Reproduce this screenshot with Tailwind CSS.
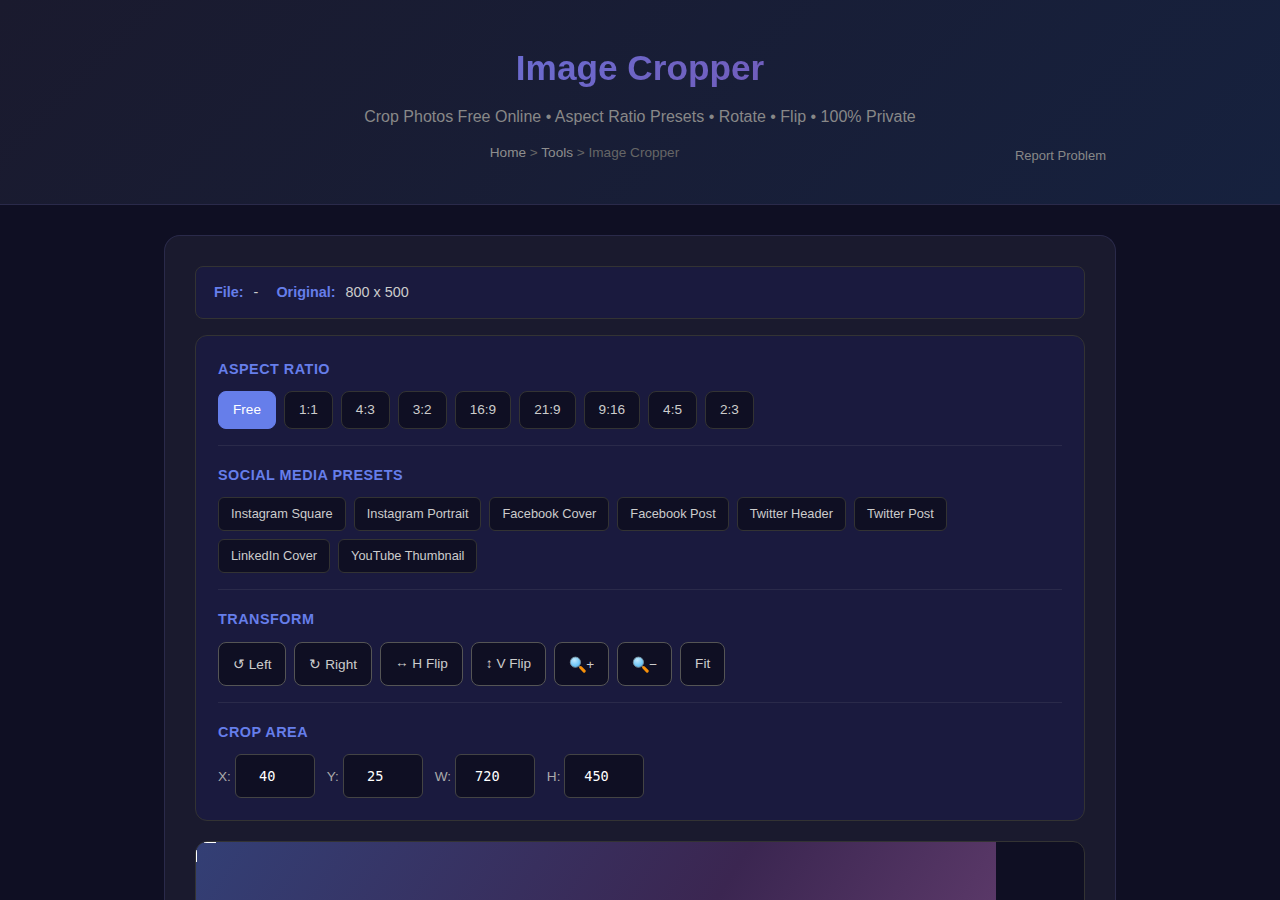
<!DOCTYPE html>
<html lang="en">
<head>
    <meta charset="UTF-8">
    <meta name="viewport" content="width=device-width, initial-scale=1.0">
    <title>Image Cropper</title>
    <script src="https://cdn.jsdelivr.net/npm/@tailwindcss/browser@4"></script>
</head>
<body class="h-[900px] overflow-hidden bg-[#0f0f23] font-['Liberation_Sans',Arial,sans-serif] leading-[1.6] text-[#ccc]">

    <!-- Header -->
    <header class="h-[205px] border-b border-[#2a2a4a] bg-[linear-gradient(135deg,#1a1a2e_0%,#16213e_100%)] pt-10">
        <div class="mx-auto w-[952px] text-center">
            <h1 class="mb-2 bg-[linear-gradient(135deg,#667eea_0%,#764ba2_100%)] bg-clip-text text-[35.2px] leading-[1.6] font-bold text-transparent">Image Cropper</h1>
            <p class="mb-3 text-[16px] leading-[1.6] text-[#888]">Crop Photos Free Online • Aspect Ratio Presets • Rotate • Flip • 100% Private</p>
            <div class="flex items-start">
                <nav class="flex-1 text-[13.6px] text-[#666]">
                    <a href="#" class="text-[#8e8e8e]">Home</a> &gt; <a href="#" class="text-[#8e8e8e]">Tools</a> &gt; Image Cropper
                </nav>
                <a href="#" class="px-2.5 pt-1 text-[13px] text-[#888]">Report Problem</a>
            </div>
        </div>
    </header>

    <!-- Tool card -->
    <main class="mx-auto mt-[30px] h-[665px] w-[952px] overflow-hidden rounded-t-2xl border border-b-0 border-[#2a2a4a] bg-[#1a1a2e] px-[30px] pt-[30px]">

        <!-- File info -->
        <div class="mb-4 flex h-[53px] items-center rounded-lg border border-[#333] bg-[#1a1a3e] px-[18px] text-[14.4px]">
            <strong class="mr-2.5 text-[#667eea]">File:</strong>
            <span class="mr-[18px]">-</span>
            <strong class="mr-2.5 text-[#667eea]">Original:</strong>
            <span>800 x 500</span>
        </div>

        <!-- Controls -->
        <div class="mb-5 rounded-xl border border-[#333] bg-[#1a1a3e] p-[22px]">
            <section class="border-b border-[#2a2a4a] pb-4">
                <h3 class="mb-2.5 text-[14.4px] leading-[1.6] font-bold tracking-[0.5px] text-[#667eea] uppercase">Aspect Ratio</h3>
                <div class="flex gap-2 text-[13.6px]">
                    <button class="h-[38px] rounded-lg border border-[#667eea] bg-[#667eea] px-3.5 text-white">Free</button>
                    <button class="h-[38px] rounded-lg border border-[#333] bg-[#0f0f23] px-3.5">1:1</button>
                    <button class="h-[38px] rounded-lg border border-[#333] bg-[#0f0f23] px-3.5">4:3</button>
                    <button class="h-[38px] rounded-lg border border-[#333] bg-[#0f0f23] px-3.5">3:2</button>
                    <button class="h-[38px] rounded-lg border border-[#333] bg-[#0f0f23] px-3.5">16:9</button>
                    <button class="h-[38px] rounded-lg border border-[#333] bg-[#0f0f23] px-3.5">21:9</button>
                    <button class="h-[38px] rounded-lg border border-[#333] bg-[#0f0f23] px-3.5">9:16</button>
                    <button class="h-[38px] rounded-lg border border-[#333] bg-[#0f0f23] px-3.5">4:5</button>
                    <button class="h-[38px] rounded-lg border border-[#333] bg-[#0f0f23] px-3.5">2:3</button>
                </div>
            </section>

            <section class="border-b border-[#2a2a4a] pt-[18px] pb-4">
                <h3 class="mb-2.5 text-[14.4px] leading-[1.6] font-bold tracking-[0.5px] text-[#667eea] uppercase">Social Media Presets</h3>
                <div class="flex flex-wrap gap-2 text-[12.8px]">
                    <button class="h-[34px] rounded-md border border-[#333] bg-[#0f0f23] px-3">Instagram Square</button>
                    <button class="h-[34px] rounded-md border border-[#333] bg-[#0f0f23] px-3">Instagram Portrait</button>
                    <button class="h-[34px] rounded-md border border-[#333] bg-[#0f0f23] px-3">Facebook Cover</button>
                    <button class="h-[34px] rounded-md border border-[#333] bg-[#0f0f23] px-3">Facebook Post</button>
                    <button class="h-[34px] rounded-md border border-[#333] bg-[#0f0f23] px-3">Twitter Header</button>
                    <button class="h-[34px] rounded-md border border-[#333] bg-[#0f0f23] px-3">Twitter Post</button>
                    <button class="h-[34px] rounded-md border border-[#333] bg-[#0f0f23] px-3">LinkedIn Cover</button>
                    <button class="h-[34px] rounded-md border border-[#333] bg-[#0f0f23] px-3">YouTube Thumbnail</button>
                </div>
            </section>

            <section class="border-b border-[#2a2a4a] pt-[18px] pb-4">
                <h3 class="mb-[11px] text-[14.4px] leading-[1.6] font-bold tracking-[0.5px] text-[#667eea] uppercase">Transform</h3>
                <div class="flex gap-2 text-[13.6px] leading-[normal]">
                    <button class="h-11 rounded-lg border border-[#555] bg-[#0f0f23] px-3.5">↺ Left</button>
                    <button class="h-11 rounded-lg border border-[#555] bg-[#0f0f23] px-3.5">↻ Right</button>
                    <button class="h-11 rounded-lg border border-[#555] bg-[#0f0f23] px-3.5 pb-0.5"><span class="inline-block -translate-y-px">↔</span> H Flip</button>
                    <button class="h-11 rounded-lg border border-[#555] bg-[#0f0f23] px-3.5 pb-0.5">↕ V Flip</button>
                    <button class="flex h-11 items-center rounded-lg border border-[#555] bg-[#0f0f23] px-3.5" aria-label="Zoom in">
                        <svg class="h-[17px] w-[17px]" viewBox="0 0 17 17" fill="none">
                            <path d="M10 10l2 2" stroke="#6b7075" stroke-width="1.6"/>
                            <path d="M11.7 11.5l3.5 3.6" stroke="#f79009" stroke-width="3" stroke-linecap="round"/>
                            <circle cx="6.4" cy="6.2" r="5.1" fill="url(#lens)" stroke="#78909c" stroke-width=".9"/>
                            <defs>
                                <radialGradient id="lens" cx=".4" cy=".3" r=".75">
                                    <stop stop-color="#c3e9fd"/>
                                    <stop offset="1" stop-color="#4fb9f5"/>
                                </radialGradient>
                            </defs>
                        </svg>+
                    </button>
                    <button class="flex h-11 items-center rounded-lg border border-[#555] bg-[#0f0f23] px-3.5" aria-label="Zoom out">
                        <svg class="h-[17px] w-[17px]" viewBox="0 0 17 17" fill="none">
                            <path d="M10 10l2 2" stroke="#6b7075" stroke-width="1.6"/>
                            <path d="M11.7 11.5l3.5 3.6" stroke="#f79009" stroke-width="3" stroke-linecap="round"/>
                            <circle cx="6.4" cy="6.2" r="5.1" fill="url(#lens)" stroke="#78909c" stroke-width=".9"/>
                        </svg>−
                    </button>
                    <button class="h-11 rounded-lg border border-[#555] bg-[#0f0f23] px-3.5 pb-0.5">Fit</button>
                </div>
            </section>

            <section class="pt-[18px]">
                <h3 class="mb-2.5 text-[14.4px] leading-[1.6] font-bold tracking-[0.5px] text-[#667eea] uppercase">Crop Area</h3>
                <div class="flex gap-3 text-[13.6px] text-[#aaa]">
                    <label class="flex items-baseline gap-[3.88px]">X: <input type="number" value="40" class="h-11 w-20 rounded-md border border-[#444] bg-[#0f0f23] px-2 text-center font-['DejaVu_Sans_Mono',monospace] text-white"></label>
                    <label class="flex items-baseline gap-[3.88px]">Y: <input type="number" value="25" class="h-11 w-20 rounded-md border border-[#444] bg-[#0f0f23] px-2 text-center font-['DejaVu_Sans_Mono',monospace] text-white"></label>
                    <label class="flex items-baseline gap-[3.78px]">W: <input type="number" value="720" class="h-11 w-20 rounded-md border border-[#444] bg-[#0f0f23] px-2 text-center font-['DejaVu_Sans_Mono',monospace] text-white"></label>
                    <label class="flex items-baseline gap-[3.6px]">H: <input type="number" value="450" class="h-11 w-20 rounded-md border border-[#444] bg-[#0f0f23] px-2 text-center font-['DejaVu_Sans_Mono',monospace] text-white"></label>
                </div>
            </section>
        </div>

        <!-- Canvas with dimmed image and the top-left crop handle -->
        <div class="relative overflow-hidden rounded-xl border border-[#333] bg-[#0f0f23]">
            <div class="h-[500px] w-[800px] bg-[linear-gradient(122.005deg,#333f75_0%,#3b2651_50%,#784a7e_100%)]"></div>
            <div class="absolute top-0 left-2 h-px w-3 bg-white"></div>
            <div class="absolute top-2 left-0 h-3 w-px bg-white"></div>
        </div>
    </main>

</body>
</html>
